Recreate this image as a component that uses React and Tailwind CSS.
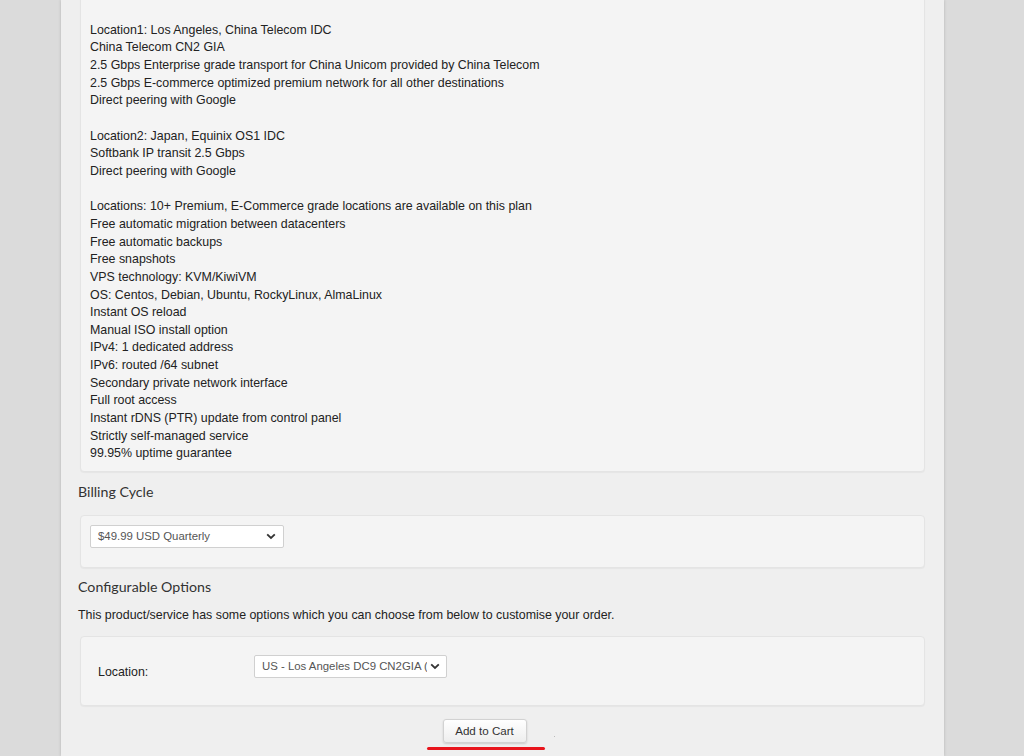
import React from "react";

const Chevron = () => (
  <svg width="10" height="7" viewBox="0 0 10 7" className="shrink-0">
    <path d="M1.2 1.3 L5 5 L8.8 1.3" fill="none" stroke="#333" strokeWidth="1.8" />
  </svg>
);

const lines1 = [
  "",
  "Location1: Los Angeles, China Telecom IDC",
  "China Telecom CN2 GIA",
  "2.5 Gbps Enterprise grade transport for China Unicom provided by China Telecom",
  "2.5 Gbps E-commerce optimized premium network for all other destinations",
  "Direct peering with Google",
  "",
  "Location2: Japan, Equinix OS1 IDC",
  "Softbank IP transit 2.5 Gbps",
  "Direct peering with Google",
  "",
  "Locations: 10+ Premium, E-Commerce grade locations are available on this plan",
  "Free automatic migration between datacenters",
  "Free automatic backups",
  "Free snapshots",
  "VPS technology: KVM/KiwiVM",
  "OS: Centos, Debian, Ubuntu, RockyLinux, AlmaLinux",
  "Instant OS reload",
  "Manual ISO install option",
  "IPv4: 1 dedicated address",
  "IPv6: routed /64 subnet",
  "Secondary private network interface",
  "Full root access",
  "Instant rDNS (PTR) update from control panel",
  "Strictly self-managed service",
  "99.95% uptime guarantee",
];

export default function App() {
  const body = { fontFamily: '"Liberation Sans", Arial, sans-serif' };
  const head = { fontFamily: 'Lato, "Open Sans", sans-serif' };
  return (
    <div className="w-[1024px] h-[756px] overflow-hidden bg-[#dbdbdb] flex justify-center" style={body}>
      <div className="ml-[61px] mr-[80px] w-[883px] shrink-0 bg-[#efefef] pl-[17px] pr-[17px] shadow-[0_0_3px_rgba(0,0,0,0.18)] flex flex-col text-[#222]">
        <div className="mx-[2px] -mt-[6px] bg-[#f4f4f4] border border-[#e4e4e4] rounded-[4px] pl-[9px] pt-[9px] pb-[8px] shadow-[0_1px_1px_rgba(0,0,0,0.04)]">
          {lines1.map((l, i) => (
            <div key={i} className="text-[12.4px] leading-[17.67px] h-[17.67px] whitespace-nowrap">
              {l}
            </div>
          ))}
        </div>

        <div className="mt-[9px] text-[14.2px] leading-[21px] text-[#333]" style={head}>Billing Cycle</div>

        <div className="mx-[2px] mt-[13px] h-[53px] bg-[#f4f4f4] border border-[#e4e4e4] rounded-[4px] pl-[9px] pt-[9px] shadow-[0_1px_1px_rgba(0,0,0,0.04)]">
          <div className="w-[194px] h-[23px] bg-white border border-[#d0d0d0] rounded-[2px] flex items-center justify-between pl-[7px] pr-[7px]">
            <span className="text-[11.4px] text-[#555]">$49.99 USD Quarterly</span>
            <Chevron />
          </div>
        </div>

        <div className="mt-[8px] text-[14.2px] leading-[21px] text-[#333]" style={head}>Configurable Options</div>

        <div className="mt-[10px] text-[12.4px] leading-[17px] text-[#222]">
          This product/service has some options which you can choose from below to customise your order.
        </div>

        <div className="mx-[2px] mt-[12px] h-[70px] bg-[#f4f4f4] border border-[#e4e4e4] rounded-[4px] pl-[17px] pt-[18px] shadow-[0_1px_1px_rgba(0,0,0,0.04)] flex items-start">
          <div className="w-[156px] pt-[9px] text-[12.4px] leading-[17px] text-[#222]">Location:</div>
          <div className="w-[193px] h-[23px] bg-white border border-[#d0d0d0] rounded-[2px] flex items-center pl-[7px] pr-[6px] gap-[3px]">
            <span className="w-[166px] text-[11.4px] text-[#555] whitespace-nowrap overflow-hidden">US - Los Angeles DC9 CN2GIA (USD)</span>
            <Chevron />
          </div>
        </div>

        <div className="mt-[13px] flex justify-center pr-[24px]">
          <div className="flex flex-col items-center">
            <div className="flex items-end">
              <div className="ml-[16px] w-[84px] h-[24px] rounded-[3px] border border-[#d2d2d2] bg-gradient-to-b from-[#ffffff] to-[#eeeeee] shadow-[0_1px_2px_rgba(0,0,0,0.15)] flex items-center justify-center text-[11.6px] text-[#333]">
                Add to Cart
              </div>
              <div className="ml-[27px] mb-[6px] w-[1px] h-[1px] bg-[#bbb]" />
            </div>
            <div className="mt-[4px] mr-[10px] w-[118px] h-[3px] bg-[#e8141c] rounded-full" />
          </div>
        </div>
      </div>
    </div>
  );
}
